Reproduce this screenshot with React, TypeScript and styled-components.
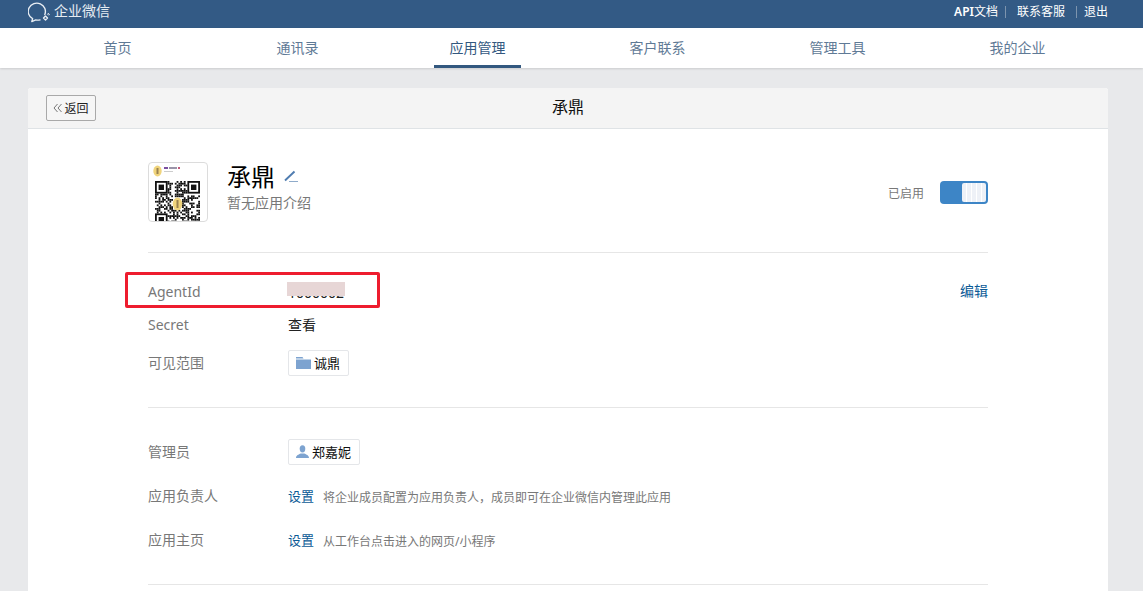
import React from "react";
import styled, { createGlobalStyle } from "styled-components";

const FONT = `"Noto Sans", "Noto Sans CJK SC", sans-serif`;

const Global = createGlobalStyle`
  html, body { margin: 0; padding: 0; height: 591px; overflow: hidden; background: #e8e9eb; }
  body { font-family: ${FONT}; font-size: 14px; color: #000; }
  #root { height: 591px; overflow: hidden; }
`;

const TopBar = styled.header`
  height: 28px; background: #335a85; display: flex; align-items: center; justify-content: space-between;
  padding: 0 35px 0 28px; color: #fff;
`;
const Brand = styled.div`display: flex; align-items: center; font-size: 14px; line-height: 20px; color: #e6ecf2; margin-top: -6px;`;
const TopLinks = styled.nav`display: flex; align-items: center; font-size: 12px; line-height: 16px; margin-top: -5px;`;
const ApiTag = styled.b`font-weight: 600;`;
const TopSep = styled.i<{ $before: number; $after: number }>`
  width: 1px; height: 12px; background: #7d94ae; margin: 0 ${p => p.$after}px 0 ${p => p.$before}px;
`;

const Nav = styled.nav`
  height: 40px; background: #fff; display: flex; padding-left: 28px; box-shadow: 0 1px 2px rgba(0,0,0,.12);
`;
const NavItem = styled.a<{ $active?: boolean }>`
  width: 180px; display: flex; justify-content: center; height: 40px;
  color: ${p => (p.$active ? "#33587f" : "#5f7a96")};
  span { display: block; width: 87px; margin-right: 1px; text-align: center; height: 40px; line-height: 40px; box-sizing: border-box;
    border-bottom: 3px solid ${p => (p.$active ? "#33587f" : "transparent")}; }
`;

const Main = styled.main`padding: 20px 35px 0 28px;`;
const Card = styled.section`background: #fff; border-radius: 3px 3px 0 0; width: 1080px; height: 503px;`;
const CardHead = styled.div`
  height: 40px; background: #f4f4f4; border-bottom: 1px solid #dfe3e6; border-radius: 3px 3px 0 0;
  display: grid; grid-template-columns: 1fr auto 1fr; align-items: center; padding: 0 18px;
`;
const BackBtn = styled.button`
  width: 50px; height: 26px; justify-self: start; padding: 0; border: 1px solid #a9a9a9; border-radius: 2px;
  background: #f6f6f6; font: 12px ${FONT}; color: #222;
  display: flex; align-items: center; justify-content: center; gap: 1px;
`;
const HeadTitle = styled.h1`margin: 0 0 2px; font-size: 16px; line-height: 22px; font-weight: 400; color: #111;`;
const Body = styled.div`padding: 0 120px;`;
const Section = styled.div`border-bottom: 1px solid #e6e6e6;`;
const AppHead = styled(Section)`display: flex; align-items: flex-start; padding: 33px 0 30px;`;
const LogoBox = styled.div`width: 58px; height: 58px; border: 1px solid #dcdcdc; border-radius: 4px; overflow: hidden; background: #fff; margin-right: 19px;`;
const AppInfo = styled.div`flex: 1;`;
const AppName = styled.h2`margin: 0; font-size: 24px; line-height: 30px; font-weight: 400; display: flex; align-items: center; gap: 9px; color: #000;`;
const PencilWrap = styled.span`display: flex; margin-top: -2px;`;
const AppDesc = styled.p`margin: 1px 0 0; font-size: 14px; line-height: 20px; color: #787878;`;
const Enable = styled.div`display: flex; align-items: center; gap: 16px; margin-top: 19px; font-size: 12px; color: #787878;`;
const Toggle = styled.div`
  width: 48px; height: 23px; box-sizing: border-box; border-radius: 4px; background: #3d85c6; display: flex; justify-content: flex-end; padding: 2px;
`;
const Knob = styled.div`
  width: 24px; height: 19px; border-radius: 2px; background: repeating-linear-gradient(90deg,#eef1f7 0 4px,#ffffff 4px 5px);
`;
const InfoSection = styled(Section)<{ $top: number }>`padding: ${p => p.$top}px 0 31px;`;
const Row = styled.div<{ $h: number; $mt?: number }>`
  position: relative; display: grid; grid-template-columns: 140px 1fr auto; align-items: center;
  height: ${p => p.$h}px; margin-top: ${p => p.$mt ?? 0}px;
`;
const Label = styled.div<{ $raised?: boolean }>`
  color: #787878; font-size: 14px; line-height: 20px; padding-bottom: ${p => (p.$raised ? 2 : 0)}px;
`;
const Value = styled.div<{ $raised?: boolean }>`
  display: flex; align-items: center; color: #222; font-size: 14px; line-height: 20px; padding-bottom: ${p => (p.$raised ? 2 : 0)}px;
`;
const EditLink = styled.a`color: #0b5a96; font-size: 14px; line-height: 20px; padding-bottom: 3px;`;
const SetLink = styled.a`color: #0b5a96; font-size: 13px;`;
const Hint = styled.span`color: #787878; font-size: 12px; margin-left: 9px; padding-top: 4px;`;
const Chip = styled.div`
  height: 26px; box-sizing: border-box; border: 1px solid #e4e6e9; border-radius: 2px; display: inline-flex; align-items: center;
  padding: 0 8px 1px 7px; gap: 3px; font-size: 13px; color: #111; background: #fff;
`;
const RedMark = styled.div`
  position: absolute; left: -23px; top: -4px; width: 255px; height: 36px; box-sizing: border-box;
  border: 3px solid #ee1c2e; border-radius: 2px; pointer-events: none;
`;
const Smudge = styled.div`
  position: absolute; left: 139px; top: 6px; width: 58px; height: 14px; background: #e7d6d6; pointer-events: none;
`;
const QrSvg = styled.svg`display: block; filter: blur(0.25px);`;

function Qr() {
  const cells: React.ReactElement[] = [];
  let s = 77;
  const n = 25, size = 1.8, ox = 6, oy = 18;
  const finder = (x: number, y: number) => x < 7 && y < 7;
  for (let y = 0; y < n; y++) {
    for (let x = 0; x < n; x++) {
      s = (s * 1103515245 + 12345) & 0x7fffffff;
      const inF = finder(x, y) || finder(n - 1 - x, y) || finder(x, n - 1 - y);
      if (inF) continue;
      if (x > 9 && x < 15 && y > 8 && y < 16) continue;
      if ((s >> 16) % 100 < 55) cells.push(<rect key={x + "-" + y} x={ox + x * size} y={oy + y * size} width={size} height={size} />);
    }
  }
  const F = ({ x, y }: { x: number; y: number }) => (
    <g transform={`translate(${ox + x * size} ${oy + y * size})`}>
      <rect width={7 * size} height={7 * size} />
      <rect x={size} y={size} width={5 * size} height={5 * size} fill="#fff" />
      <rect x={2 * size} y={2 * size} width={3 * size} height={3 * size} />
    </g>
  );
  return (
    <QrSvg width="58" height="58" viewBox="0 0 58 58" fill="#111">
      <ellipse cx="8.5" cy="8" rx="4.2" ry="5.4" fill="#f0d47c" />
      <rect x="7.5" y="5" width="2" height="6" fill="#9a8250" />
      <rect x="15" y="4" width="4" height="2" fill="#7a4fa0" />
      <rect x="20" y="4" width="8" height="2" fill="#9a94a8" />
      <rect x="29" y="4" width="2" height="2" fill="#c45a7a" />
      <rect x="15" y="8" width="9" height="1" fill="#ccc" />
      {cells}
      <F x={0} y={0} />
      <F x={n - 7} y={0} />
      <F x={0} y={n - 7} />
      <ellipse cx="28.5" cy="41" rx="4.8" ry="6.4" fill="#f0d47c" />
      <rect x="27.5" y="37" width="2" height="8" fill="#9a8250" />
    </QrSvg>
  );
}

const WeComLogo = () => (
  <svg width="26" height="24" viewBox="0 0 26 24" fill="none" stroke="#e9eef4" strokeWidth="1.4" strokeLinecap="round" strokeLinejoin="round">
    <path d="M16.8 15.5A8.6 8.3 0 1 0 4.6 19.7L3.8 22.6 7.8 20.9C9 21.1 10.5 21.2 12 20.9" />
    <path d="M17.5 17l2 2-2 2-2-2z" />
    <path d="M20.6 14.6l.8.8-.8.8-.8-.8z" strokeWidth="1" />
  </svg>
);
const Chevrons = () => (
  <svg width="10" height="10" viewBox="0 0 10 10" fill="none" stroke="#777" strokeWidth="1">
    <path d="M4.5 1L1 5l3.5 4M8.5 1L5 5l3.5 4" />
  </svg>
);
const Pencil = () => (
  <svg width="15" height="12" viewBox="0 0 15 12" fill="none">
    <path d="M1 10.5L10.5 1.5" stroke="#4f7cb0" strokeWidth="1.9" />
    <path d="M5 11.5H14" stroke="#8fabca" strokeWidth="1" />
  </svg>
);
const FolderIcon = () => (
  <svg width="15" height="12" viewBox="0 0 15 12" fill="#7da3d0">
    <path d="M0 0h6.5l1 1.5H0z" />
    <rect y="2.5" width="15" height="9.5" />
  </svg>
);
const UserIcon = () => (
  <svg width="13" height="13" viewBox="0 0 13 13" fill="#7da3d0">
    <ellipse cx="6.5" cy="3.8" rx="2.8" ry="3.6" />
    <path d="M0 13c0-2.6 2.6-3.4 4.8-4.4h3.4C10.4 9.6 13 10.4 13 13z" />
  </svg>
);

const navItems = ["首页", "通讯录", "应用管理", "客户联系", "管理工具", "我的企业"];

export default function App() {
  return (
    <>
      <Global />
      <TopBar>
        <Brand><WeComLogo />企业微信</Brand>
        <TopLinks>
          <span><ApiTag>API</ApiTag>文档</span>
          <TopSep $before={7} $after={11} />
          <span>联系客服</span>
          <TopSep $before={11} $after={7} />
          <span>退出</span>
        </TopLinks>
      </TopBar>
      <Nav>
        {navItems.map(n => (
          <NavItem key={n} $active={n === "应用管理"}><span>{n}</span></NavItem>
        ))}
      </Nav>
      <Main>
        <Card>
          <CardHead>
            <BackBtn><Chevrons />返回</BackBtn>
            <HeadTitle>承鼎</HeadTitle>
            <span />
          </CardHead>
          <Body>
            <AppHead>
              <LogoBox><Qr /></LogoBox>
              <AppInfo>
                <AppName>承鼎<PencilWrap><Pencil /></PencilWrap></AppName>
                <AppDesc>暂无应用介绍</AppDesc>
              </AppInfo>
              <Enable>已启用<Toggle><Knob /></Toggle></Enable>
            </AppHead>
            <InfoSection $top={23}>
              <Row $h={33}>
                <Label $raised>AgentId</Label>
                <Value>1000002</Value>
                <EditLink>编辑</EditLink>
                <Smudge />
                <RedMark />
              </Row>
              <Row $h={33}>
                <Label $raised>Secret</Label>
                <Value $raised>查看</Value>
              </Row>
              <Row $h={26} $mt={8}>
                <Label>可见范围</Label>
                <Value><Chip><FolderIcon />诚鼎</Chip></Value>
              </Row>
            </InfoSection>
            <InfoSection $top={31}>
              <Row $h={26}>
                <Label>管理员</Label>
                <Value><Chip><UserIcon />郑嘉妮</Chip></Value>
              </Row>
              <Row $h={26} $mt={18}>
                <Label>应用负责人</Label>
                <Value><SetLink>设置</SetLink><Hint>将企业成员配置为应用负责人，成员即可在企业微信内管理此应用</Hint></Value>
              </Row>
              <Row $h={26} $mt={18}>
                <Label>应用主页</Label>
                <Value><SetLink>设置</SetLink><Hint>从工作台点击进入的网页/小程序</Hint></Value>
              </Row>
            </InfoSection>
          </Body>
        </Card>
      </Main>
    </>
  );
}
